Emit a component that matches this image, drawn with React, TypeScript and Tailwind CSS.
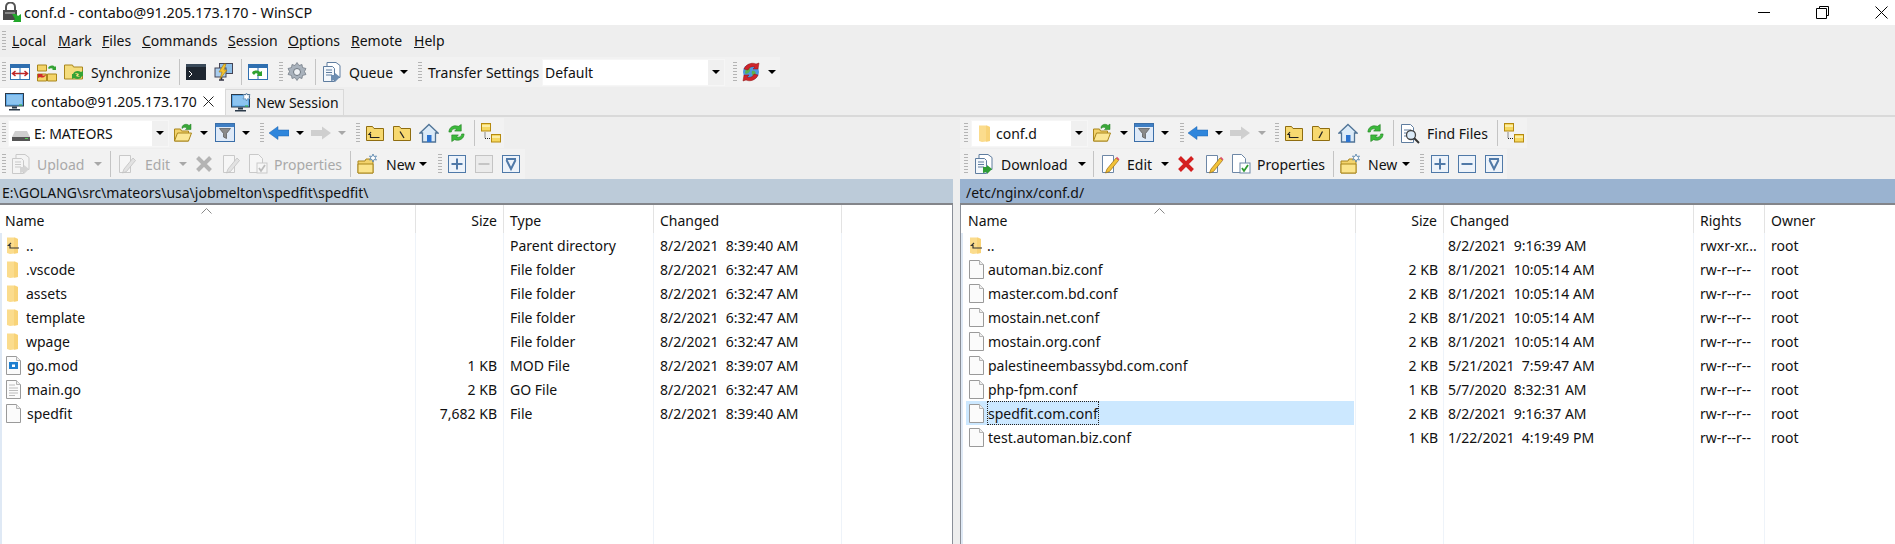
import type { ReactNode } from "react";

// small helpers so the toolbars read top to bottom
function Grip({ ml = "ml-0" }: { ml?: string }) {
  return (
    <div className={`${ml} w-[4px] h-[20px] shrink-0 bg-[repeating-linear-gradient(to_bottom,#b4b4b4_0px,#b4b4b4_1px,transparent_1px,transparent_3px)]`} />
  );
}

function Sep({ ml }: { ml: string }) {
  return <div className={`${ml} w-[1px] h-[26px] shrink-0 bg-[#c4c4c4]`} />;
}

function Caret({ ml, off }: { ml: string; off?: boolean }) {
  return (
    <svg width="8" height="4" viewBox="0 0 8 4" className={`${ml} shrink-0`}>
      <path d="M0 0h8L4 4z" fill={off ? "#a8a8a8" : "#000"} />
    </svg>
  );
}

function Icon({ ml, w = 20, h = 20, vb = "0 0 20 20", children }: { ml: string; w?: number; h?: number; vb?: string; children: ReactNode }) {
  return (
    <svg width={w} height={h} viewBox={vb} className={`${ml} shrink-0`}>
      {children}
    </svg>
  );
}

function Label({ ml, w, off, children }: { ml: string; w: string; off?: boolean; children: ReactNode }) {
  return <span className={`${ml} ${w} shrink-0 whitespace-nowrap ${off ? "text-[#a9a9a9]" : "text-[#111]"}`}>{children}</span>;
}

const GLYPHS = {
  open: (
    <>
      <path d="M1.500 6h6l1 2h7v10h-14z" fill="#f3d36c" stroke="#a9861c" />
      <path d="M1.500 18l3-8h14l-3 8z" fill="#fbe796" stroke="#a9861c" />
      <path d="M9 4c1-3 5-3.500 7-1.500l2-1.500v5.500h-5.500l1.500-1.500c-1.500-1-3.500-1-5 .5z" fill="#38a838" stroke="#1d7a1d" strokeWidth=".5" />
    </>
  ),
  filter: (
    <>
      <rect x=".5" y=".5" width="19" height="18" fill="#dfeaf8" stroke="#3a6ea8" />
      <rect x="1" y="1" width="18" height="3" fill="#3f7fc4" />
      <path d="M4.500 5.500h11l-4 5v5l-3-1.500v-3.500z" fill="#8a8a8a" stroke="#555" strokeWidth=".7" />
    </>
  ),
  back: <path d="M0 10l9-6.500v3.500h11v6h-11v3.500z" fill="#2f86dc" stroke="#1e63ae" strokeWidth=".5" />,
  forward: <path d="M20 10l-9-6.500v3.500h-11v6h11v3.500z" fill="#cfcfcf" />,
  home: (
    <>
      <path d="M10 1.500l9 8.500h-2.500v9h-13v-9h-2.500z" fill="#dcebf8" stroke="#4f7396" strokeWidth="1.300" />
      <rect x="8" y="12" width="4.500" height="7" fill="#2b73d0" />
    </>
  ),
  refresh: (
    <>
      <path d="M2 9c0-5 5-8 10-6l3-2v7h-7l2-2c-3-1-5 0-5.500 3z" fill="#3cb93c" stroke="#1d7d1d" strokeWidth=".6" />
      <path d="M18 11c0 5-5 8-10 6l-3 2v-7h7l-2 2c3 1 5 0 5.500-3z" fill="#3cb93c" stroke="#1d7d1d" strokeWidth=".6" />
    </>
  ),
  tree: (
    <>
      <rect x=".5" y=".5" width="9" height="7.500" fill="#f6d860" stroke="#b58a10" />
      <rect x="10.500" y="11.500" width="9" height="7.500" fill="#f6d860" stroke="#b58a10" />
      <path d="M1 3h8M11 14h8" stroke="#fdf3bd" strokeWidth="1.500" />
      <path d="M4 9.500v6h6" stroke="#222" strokeDasharray="1 1" fill="none" />
    </>
  ),
  newFolder: (
    <>
      <path d="M1 7h7l1-2h7v14h-15z" fill="#f3d36c" stroke="#a9861c" />
      <path d="M1 10h15v9h-15z" fill="#fbe48c" stroke="#a9861c" />
      <path d="M16 0l1 2.500 2.500-.5-1.500 2 1.500 2-2.500-.5-1 2.500-1-2.500-2.500.5 1.500-2-1.500-2 2.500.5z" fill="#fff" stroke="#4f7da8" strokeWidth=".8" />
    </>
  ),
  edit: (
    <>
      <path d="M2.500 1.500h11v17h-11z" fill="#fff" stroke="#6d87a6" />
      <path d="M7 15l-1.500 4 4-1.500 9-11-2.500-2.500z" fill="#f2c238" stroke="#9a6c12" strokeWidth=".7" />
      <path d="M16 4l2.500 2.500 1-1.300-2.500-2.500z" fill="#e0526a" />
    </>
  ),
  editOff: (
    <>
      <path d="M2.500 1.500h11v17h-11z" fill="#f6f6f6" stroke="#c9c9c9" />
      <path d="M7 15l-1.500 4 4-1.500 9-11-2.500-2.500z" fill="#e2e2e2" stroke="#bdbdbd" strokeWidth=".7" />
    </>
  ),
  props: (
    <>
      <path d="M1.500 .5h9l4 4v14h-13z" fill="#fff" stroke="#6d87a6" />
      <rect x="9" y="9" width="10" height="10" fill="#fff" stroke="#6d87a6" />
      <path d="M11 14l2 3 4-6" stroke="#2e9a2e" strokeWidth="1.800" fill="none" />
    </>
  ),
  propsOff: (
    <>
      <path d="M1.500 .5h9l4 4v14h-13z" fill="#f6f6f6" stroke="#c9c9c9" />
      <rect x="9" y="9" width="10" height="10" fill="#f6f6f6" stroke="#c9c9c9" />
      <path d="M11 14l2 3 4-6" stroke="#bcbcbc" strokeWidth="1.800" fill="none" />
    </>
  ),
};

function Glyph({ name, ml, w = 20, h = 20 }: { name: keyof typeof GLYPHS; ml: string; w?: number; h?: number }) {
  return (
    <Icon ml={ml} w={w} h={h}>
      {GLYPHS[name]}
    </Icon>
  );
}

function UpFolder({ ml, mark }: { ml: string; mark: "up" | "back" | "slash" }) {
  return (
    <Icon ml={ml} w={18} h={18} vb="0 0 18 18">
      <path d="M.5 16.500v-14h6l1.500 2h9.500v12z" fill="#f7d970" stroke="#8f6d10" />
      {mark === "up" && <path d="M5 8l-2 2.500h1.500v3h9" stroke="#222" strokeWidth="1.200" fill="none" />}
      {mark === "back" && <path d="M7 7.500l4 6.500" stroke="#222" strokeWidth="1.300" />}
      {mark === "slash" && <path d="M10.500 7.500l-3.500 6.500" stroke="#222" strokeWidth="1.300" />}
    </Icon>
  );
}

function Square({ ml, kind, off }: { ml: string; kind: "plus" | "minus" | "v"; off?: boolean }) {
  const line = off ? "#c4c4c4" : "#4f79a8";
  return (
    <Icon ml={ml} w={18} h={18} vb="0 0 18 18">
      <rect x=".5" y=".5" width="17" height="17" fill={off ? "#ebebeb" : "#edf3fa"} stroke={line} />
      {kind !== "v" && <path d="M3.500 9h11" stroke={line} strokeWidth="2" />}
      {kind === "plus" && <path d="M9 3.500v11" stroke={line} strokeWidth="2" />}
      {kind === "v" && <path d="M4 4h10M4.500 5l4.500 9 4.500-9" stroke={line} strokeWidth="2" fill="none" />}
    </Icon>
  );
}

function BigX({ ml, off }: { ml: string; off?: boolean }) {
  return (
    <Icon ml={ml} w={18} h={18} vb="0 0 18 18">
      <path d="M2.500 2.500l13 13M15.500 2.500l-13 13" stroke={off ? "#b4b4b4" : "#d42020"} strokeWidth="4" />
    </Icon>
  );
}

function DocStack({ ml, green, off }: { ml: string; green?: boolean; off?: boolean }) {
  const line = off ? "#c9c9c9" : "#5f7d9f";
  return (
    <Icon ml={ml}>
      <path d="M5 .5h9l4 3v12h-13z" fill={off ? "#f4f4f4" : "#fff"} stroke={line} />
      <path d="M1.500 4.500h9l2 2v13h-11z" fill={off ? "#f4f4f4" : "#f4f8fc"} stroke={line} />
      <path d="M4 8h6M4 10.500h6M4 13h6" stroke={line} />
      <path d="M9 19l4-1v2l5-5-5-4v2h-4z" fill={green ? "#2f9d35" : off ? "#d4d4d4" : "#6f8fb2"} />
    </Icon>
  );
}

function Monitor({ ml, star }: { ml: string; star?: boolean }) {
  return (
    <Icon ml={ml} w={20} h={20}>
      <rect x=".5" y="1.500" width="18" height="12.500" fill="#5ba6e6" stroke="#2b3a4a" />
      <rect x="2" y="3" width="15" height="9.500" fill="#8cc4f0" />
      <path d="M7 14.500h5v2h-5zM4 17h11v1.500h-11z" fill="#2b3a4a" />
      <rect x="14" y="12.500" width="3" height="1" fill="#38c038" />
      {star && <path d="M15.500 0l1 2 2.500-.5-1 2.500 1 2-2.500-.3-1 2.300-1-2.300-2.500.3 1-2-1-2.500 2.500.5z" fill="#fff" stroke="#4f7da8" strokeWidth=".7" />}
    </Icon>
  );
}

function Combo({ ml, w, icon, text, textMl }: { ml: string; w: string; icon: ReactNode; text: string; textMl: string }) {
  return (
    <div className={`${ml} ${w} h-[27px] shrink-0 bg-white flex items-center border border-[#f6f6f6]`}>
      {icon}
      <span className={`${textMl} text-[#111] whitespace-nowrap`}>{text}</span>
      <div className="ml-auto w-[16px] h-full bg-[#f0f0f0] flex items-center justify-center">
        <svg width="8" height="4" viewBox="0 0 8 4">
          <path d="M0 0h8L4 4z" fill="#000" />
        </svg>
      </div>
    </div>
  );
}

function SmallFolder({ up }: { up?: boolean }) {
  return (
    <svg width="14" height="19" viewBox="0 0 14 19" className="shrink-0">
      <path d="M1 1.500h8l3 1.500v14l-8 1-3-1z" fill="#fbdc8d" />
      <path d="M8 1.500l4 1.500v14l-4 1z" fill="#f6cd6a" opacity=".6" />
      {up && <path d="M5 7l-2.500 2.500h1.500v2.500h9" stroke="#333" strokeWidth="1.200" fill="none" />}
    </svg>
  );
}

function FileIcon({ lines, mod }: { lines?: boolean; mod?: boolean }) {
  return (
    <svg width="15" height="19" viewBox="0 0 15 19" className="shrink-0">
      <path d="M.5 .5h10l4 4v14h-14z" fill="#fbfbfb" stroke="#9a9a9a" />
      <path d="M10.500 .5v4h4" fill="#eee" stroke="#b4b4b4" />
      {lines && <path d="M3 5h6M3 8h9M3 10.500h9M3 13h9M3 15.500h6" stroke="#bcbcbc" />}
      {mod && (
        <>
          <rect x="3" y="6" width="9" height="7" fill="#1f7fd0" />
          <rect x="6" y="8.500" width="3" height="2.500" fill="#fff" />
        </>
      )}
    </svg>
  );
}

type Row = { icon: ReactNode; name: string; size: string; a: string; b: string; rights?: string; owner?: string };

const leftRows: Row[] = [
  { icon: <SmallFolder up />, name: "..", size: "", a: "Parent directory", b: "8/2/2021  8:39:40 AM" },
  { icon: <SmallFolder />, name: ".vscode", size: "", a: "File folder", b: "8/2/2021  6:32:47 AM" },
  { icon: <SmallFolder />, name: "assets", size: "", a: "File folder", b: "8/2/2021  6:32:47 AM" },
  { icon: <SmallFolder />, name: "template", size: "", a: "File folder", b: "8/2/2021  6:32:47 AM" },
  { icon: <SmallFolder />, name: "wpage", size: "", a: "File folder", b: "8/2/2021  6:32:47 AM" },
  { icon: <FileIcon mod />, name: "go.mod", size: "1 KB", a: "MOD File", b: "8/2/2021  8:39:07 AM" },
  { icon: <FileIcon lines />, name: "main.go", size: "2 KB", a: "GO File", b: "8/2/2021  6:32:47 AM" },
  { icon: <FileIcon />, name: "spedfit", size: "7,682 KB", a: "File", b: "8/2/2021  8:39:40 AM" },
];

const rightRows: Row[] = [
  { icon: <SmallFolder up />, name: "..", size: "", a: "8/2/2021  9:16:39 AM", b: "", rights: "rwxr-xr...", owner: "root" },
  { icon: <FileIcon />, name: "automan.biz.conf", size: "2 KB", a: "8/1/2021  10:05:14 AM", b: "", rights: "rw-r--r--", owner: "root" },
  { icon: <FileIcon />, name: "master.com.bd.conf", size: "2 KB", a: "8/1/2021  10:05:14 AM", b: "", rights: "rw-r--r--", owner: "root" },
  { icon: <FileIcon />, name: "mostain.net.conf", size: "2 KB", a: "8/1/2021  10:05:14 AM", b: "", rights: "rw-r--r--", owner: "root" },
  { icon: <FileIcon />, name: "mostain.org.conf", size: "2 KB", a: "8/1/2021  10:05:14 AM", b: "", rights: "rw-r--r--", owner: "root" },
  { icon: <FileIcon />, name: "palestineembassybd.com.conf", size: "2 KB", a: "5/21/2021  7:59:47 AM", b: "", rights: "rw-r--r--", owner: "root" },
  { icon: <FileIcon />, name: "php-fpm.conf", size: "1 KB", a: "5/7/2020  8:32:31 AM", b: "", rights: "rw-r--r--", owner: "root" },
  { icon: <FileIcon />, name: "spedfit.com.conf", size: "2 KB", a: "8/2/2021  9:16:37 AM", b: "", rights: "rw-r--r--", owner: "root" },
  { icon: <FileIcon />, name: "test.automan.biz.conf", size: "1 KB", a: "1/22/2021  4:19:49 PM", b: "", rights: "rw-r--r--", owner: "root" },
];

function HeaderCell({ w, right, pl = "pl-[6px]", children }: { w: string; right?: boolean; pl?: string; children?: ReactNode }) {
  return (
    <div className={`${w} shrink-0 h-full border-r border-[#e3e3e3] flex items-center pt-[2px] pr-[6px] ${pl} ${right ? "justify-end" : ""}`}>
      {children}
    </div>
  );
}

function SortMark({ className }: { className: string }) {
  return (
    <svg width="11" height="6" viewBox="0 0 11 6" className={`absolute top-[3px] ${className}`}>
      <path d="M.5 5.500l5-5 5 5" stroke="#8a8a8a" fill="none" />
    </svg>
  );
}

function ColLine({ left }: { left: string }) {
  return <div className={`absolute inset-y-0 ${left} w-[1px] bg-[#eef3f9]`} />;
}

export default function App() {
  return (
    <div className="w-[1895px] h-[544px] overflow-hidden bg-white flex flex-col text-[14px] font-['Noto_Sans','Open_Sans',sans-serif] text-[#111]">
      {/* title bar */}
      <div className="h-[25px] shrink-0 bg-white flex items-center">
        <svg width="20" height="21" viewBox="0 0 20 21" className="ml-[2px] shrink-0">
          <path d="M4 8V5a4.500 4.500 0 019 0v3" stroke="#555" strokeWidth="2" fill="none" />
          <rect x="1" y="8" width="14" height="10" fill="#4a4a4a" />
          <rect x="3" y="10" width="10" height="2" fill="#8a8a8a" />
          <path d="M10 12h4l2 2 3-2v8h-8l2-3z" fill="#22a82a" />
        </svg>
        <span className="ml-[2px] whitespace-nowrap text-[14.400px]">conf.d - contabo@91.205.173.170 - WinSCP</span>
        <svg width="12" height="1" viewBox="0 0 12 1" className="ml-auto shrink-0">
          <path d="M0 .5h12" stroke="#000" />
        </svg>
        <svg width="13" height="13" viewBox="0 0 13 13" className="ml-[46px] shrink-0">
          <path d="M3.500 2.500v-2h9v9h-2M.5 2.500h10v10h-10z" stroke="#000" fill="none" />
        </svg>
        <svg width="13" height="13" viewBox="0 0 13 13" className="ml-[46px] mr-[7px] shrink-0">
          <path d="M.5.500l12 12M12.500.5l-12 12" stroke="#000" />
        </svg>
      </div>

      {/* top band */}
      <div className="h-[90px] shrink-0 bg-[#eeeeee] flex flex-col">
        <div className="h-[31px] shrink-0 flex items-center">
          <Grip ml="ml-[2px]" />
          <span className="ml-[6px] w-[46px] shrink-0"><u>L</u>ocal</span>
          <span className="w-[44px] shrink-0"><u>M</u>ark</span>
          <span className="w-[40px] shrink-0"><u>F</u>iles</span>
          <span className="w-[86px] shrink-0"><u>C</u>ommands</span>
          <span className="w-[60px] shrink-0"><u>S</u>ession</span>
          <span className="w-[63px] shrink-0"><u>O</u>ptions</span>
          <span className="w-[63px] shrink-0"><u>R</u>emote</span>
          <span className="shrink-0"><u>H</u>elp</span>
        </div>
        <div className="h-[32px] shrink-0 flex items-center">
          <div className="h-[30px] pr-[4px] flex items-center bg-[#f2f2f2]">
            <Grip ml="ml-[2px]" />
            <Icon ml="ml-[4px]">
              <rect x=".5" y="2.500" width="19" height="15" fill="#fff" stroke="#2f6fb0" />
              <rect x="1" y="3" width="18" height="3" fill="#2f6fb0" />
              <path d="M10 3v14" stroke="#2f6fb0" />
              <path d="M3 11.500h14M5.500 9l-3 2.500 3 2.500M14.500 9l3 2.500-3 2.500" stroke="#c02626" strokeWidth="1.500" fill="none" />
            </Icon>
            <Icon ml="ml-[7px]">
              <path d="M.5 3h9v6h-9zM.5 12h9v7h-9zM10.500 12h9v7h-9z" fill="#f4d468" stroke="#a9861c" />
              <path d="M11 6c2-3 5-3 7-1l1-1v4h-4l1-1c-1-1-3-1-4 0z" fill="#35a335" />
              <path d="M9 13c-2 3-4 3-6 2l-2 1v-4h5l-1 1c1 1 3 1 4-1z" fill="#d02a2a" />
            </Icon>
            <Icon ml="ml-[7px]">
              <path d="M.5 3h8l1 2h9v12h-18z" fill="#f4dc7c" stroke="#a9861c" />
              <path d="M9 12c1-3 5-4 8-2l2-1v5h-5l1-2c-2-1-4-1-5 1z" fill="#35a335" />
              <path d="M18 14c-1 3-5 4-8 2l-2 1v-5h5l-1 2c2 1 4 1 5-1z" fill="#35a335" />
            </Icon>
            <Label ml="ml-[7px]" w="w-[79px]">Synchronize</Label>
            <Sep ml="ml-[9px]" />
            <Icon ml="ml-[6px]">
              <rect y="2" width="20" height="16" fill="#1e2630" />
              <rect y="2" width="20" height="3" fill="#3a4a5a" />
              <path d="M3 9l3 3-3 3" stroke="#fff" fill="none" />
            </Icon>
            <Icon ml="ml-[7px]">
              <rect x="6.500" y="1.500" width="13" height="10" fill="#8fbfe8" stroke="#445" />
              <rect x="2" y="6" width="11" height="9" fill="#a9cdee" stroke="#445" />
              <path d="M6 18h5M8.500 15v3" stroke="#334" strokeWidth="1.500" />
              <path d="M11 2l-5 8h3l-2 7 7-9h-3l2-6z" fill="#f4c330" stroke="#a5780e" strokeWidth=".6" />
            </Icon>
            <Sep ml="ml-[8px]" />
            <Icon ml="ml-[6px]">
              <rect x=".5" y="2.500" width="19" height="15" fill="#fff" stroke="#2f6fb0" />
              <rect x="1" y="3" width="18" height="3" fill="#2f6fb0" />
              <path d="M10 3v14" stroke="#2f6fb0" />
              <path d="M4 11c1-3 6-3 8-1l2-1v5h-5l1-2c-1-1-3-1-4 1z" fill="#2fa12f" />
            </Icon>
            <Grip ml="ml-[11px]" />
            <Icon ml="ml-[4px]">
              <path d="M10 .5l2 3 3-1 .5 3 3.500 1-1.500 3 1.500 3-3.500 1-.5 3-3-1-2 3-2-3-3 1-.5-3-3.500-1 1.500-3-1.500-3 3.500-1 .5-3 3 1z" fill="#a9b2bc" stroke="#6d7680" strokeWidth=".7" />
              <circle cx="10" cy="10" r="3.500" fill="#eef1f4" stroke="#6d7680" />
            </Icon>
            <Sep ml="ml-[8px]" />
            <DocStack ml="ml-[6px]" />
            <Label ml="ml-[7px]" w="w-[43px]">Queue</Label>
            <Caret ml="ml-[8px]" />
            <Grip ml="ml-[10px]" />
            <Label ml="ml-[6px]" w="w-[108px]">Transfer Settings</Label>
            <Combo ml="ml-[6px]" w="w-[183px]" icon={null} text="Default" textMl="ml-[2px]" />
            <Grip ml="ml-[8px]" />
            <Icon ml="ml-[4px]">
              <circle cx="10" cy="10" r="8" fill="#4f96e0" />
              <path d="M5 6c3-2 5 1 4 3s-4 4-5 2zM11 9c3-1 5 2 3 5-2 1-4-2-3-5z" fill="#59b24f" />
              <path d="M3 7c2-5 8-7 12-5l3-1-1 6h-5l2-2c-3-1-6 0-7 3zM17 13c-2 5-8 7-12 5l-3 1 1-6h5l-2 2c3 1 6 0 7-3z" fill="#d0242a" stroke="#8f1414" strokeWidth=".5" />
            </Icon>
            <Caret ml="ml-[7px]" />
          </div>
        </div>
        <div className="h-[27px] shrink-0 flex items-end">
          <div className="w-[225px] h-[27px] shrink-0 bg-white flex items-center">
            <Monitor ml="ml-[5px]" />
            <span className="ml-[6px] whitespace-nowrap w-[172px] shrink-0">contabo@91.205.173.170</span>
            <svg width="11" height="11" viewBox="0 0 11 11" className="shrink-0">
              <path d="M.5.500l10 10M10.500.5l-10 10" stroke="#222" />
            </svg>
          </div>
          <div className="w-[119px] h-[26px] shrink-0 bg-[#f0f0f0] border border-b-0 border-[#d9d9d9] flex items-center">
            <Monitor ml="ml-[5px]" star />
            <span className="ml-[5px] whitespace-nowrap">New Session</span>
          </div>
        </div>
      </div>

      {/* panels */}
      <div className="h-[429px] shrink-0 flex flex-col bg-[#eeeeee] border-t-2 border-[#d9d9d9]">
        <div className="h-[62px] shrink-0 flex">
          <div className="w-[960px] shrink-0 flex flex-col">
            <div className="h-[32px] shrink-0 flex items-center">
              <div className="h-[30px] pr-[3px] flex items-center bg-[#f2f2f2]">
                <Grip ml="ml-[2px]" />
                <Combo
                  ml="ml-[2px]"
                  w="w-[161px]"
                  text="E: MATEORS"
                  textMl="ml-[4px]"
                  icon={
                    <svg width="18" height="10" viewBox="0 0 18 10" className="ml-[3px] mt-[5px] shrink-0">
                      <path d="M3 0h12l3 6v4h-18v-4z" fill="#cfcfcf" />
                      <path d="M0 6h18v4h-18z" fill="#555" />
                      <rect x="13" y="7" width="3" height="1" fill="#5c5" />
                    </svg>
                  }
                />
                <Glyph name="open" ml="ml-[4px]" />
                <Caret ml="ml-[7px]" />
                <Glyph name="filter" ml="ml-[7px]" />
                <Caret ml="ml-[7px]" />
                <Grip ml="ml-[10px]" />
                <Glyph name="back" ml="ml-[5px]" />
                <Caret ml="ml-[7px]" />
                <Glyph name="forward" ml="ml-[7px]" />
                <Caret ml="ml-[7px]" off />
                <Grip ml="ml-[10px]" />
                <UpFolder ml="ml-[6px]" mark="up" />
                <UpFolder ml="ml-[9px]" mark="back" />
                <Glyph name="home" ml="ml-[8px]" />
                <Glyph name="refresh" ml="ml-[8px]" w={19} h={20} />
                <Sep ml="ml-[8px]" />
                <Glyph name="tree" ml="ml-[6px]" />
              </div>
            </div>
            <div className="h-[30px] shrink-0 flex items-center">
              <div className="h-[30px] pr-[5px] flex items-center bg-[#f2f2f2]">
                <Grip ml="ml-[2px]" />
                <DocStack ml="ml-[5px]" off />
                <Label ml="ml-[6px]" w="w-[48px]" off>Upload</Label>
                <Caret ml="ml-[9px]" off />
                <Sep ml="ml-[8px]" />
                <Glyph name="editOff" ml="ml-[6px]" />
                <Label ml="ml-[8px]" w="w-[33px]" off>Edit</Label>
                <Caret ml="ml-[1px]" off />
                <BigX ml="ml-[8px]" off />
                <Glyph name="editOff" ml="ml-[8px]" />
                <Glyph name="propsOff" ml="ml-[7px]" />
                <Label ml="ml-[6px]" w="w-[67px]" off>Properties</Label>
                <Sep ml="ml-[9px]" />
                <Glyph name="newFolder" ml="ml-[6px]" />
                <Label ml="ml-[9px]" w="w-[29px]">New</Label>
                <Caret ml="ml-[4px]" />
                <Grip ml="ml-[11px]" />
                <Square ml="ml-[6px]" kind="plus" />
                <Square ml="ml-[9px]" kind="minus" off />
                <Square ml="ml-[9px]" kind="v" />
              </div>
            </div>
          </div>
          <div className="flex-1 flex flex-col">
            <div className="h-[32px] shrink-0 flex items-center">
              <div className="h-[30px] pr-[3px] flex items-center bg-[#f2f2f2]">
                <Grip ml="ml-[4px]" />
                <Combo
                  ml="ml-[3px]"
                  w="w-[117px]"
                  text="conf.d"
                  textMl="ml-[4px]"
                  icon={<div className="ml-[6px] flex"><SmallFolder /></div>}
                />
                <Glyph name="open" ml="ml-[4px]" />
                <Caret ml="ml-[8px]" />
                <Glyph name="filter" ml="ml-[6px]" />
                <Caret ml="ml-[7px]" />
                <Grip ml="ml-[11px]" />
                <Glyph name="back" ml="ml-[4px]" />
                <Caret ml="ml-[7px]" />
                <Glyph name="forward" ml="ml-[7px]" />
                <Caret ml="ml-[8px]" off />
                <Grip ml="ml-[9px]" />
                <UpFolder ml="ml-[6px]" mark="up" />
                <UpFolder ml="ml-[9px]" mark="slash" />
                <Glyph name="home" ml="ml-[8px]" />
                <Glyph name="refresh" ml="ml-[8px]" w={19} h={20} />
                <Sep ml="ml-[8px]" />
                <svg width="20" height="21" viewBox="0 0 20 21" className="ml-[6px] shrink-0">
                  <path d="M1.500 1.500h9l3 3v15h-12z" fill="#fff" stroke="#5f7d9f" />
                  <path d="M4 7h7M4 10h3M4 13h3" stroke="#5f7d9f" />
                  <circle cx="11" cy="12" r="4.500" fill="#dcebf8" stroke="#444" strokeWidth="1.300" />
                  <path d="M14 15l5 5" stroke="#333" strokeWidth="2" />
                </svg>
                <Label ml="ml-[7px]" w="w-[62px]">Find Files</Label>
                <Sep ml="ml-[8px]" />
                <Glyph name="tree" ml="ml-[6px]" />
              </div>
            </div>
            <div className="h-[30px] shrink-0 flex items-center">
              <div className="h-[30px] pr-[4px] flex items-center bg-[#f2f2f2]">
                <Grip ml="ml-[4px]" />
                <DocStack ml="ml-[6px]" green />
                <Label ml="ml-[7px]" w="w-[67px]">Download</Label>
                <Caret ml="ml-[10px]" />
                <Sep ml="ml-[7px]" />
                <Glyph name="edit" ml="ml-[6px]" />
                <Label ml="ml-[7px]" w="w-[31px]">Edit</Label>
                <Caret ml="ml-[3px]" />
                <BigX ml="ml-[8px]" />
                <Glyph name="edit" ml="ml-[9px]" />
                <Glyph name="props" ml="ml-[7px]" />
                <Label ml="ml-[6px]" w="w-[67px]">Properties</Label>
                <Sep ml="ml-[9px]" />
                <Glyph name="newFolder" ml="ml-[6px]" />
                <Label ml="ml-[8px]" w="w-[30px]">New</Label>
                <Caret ml="ml-[4px]" />
                <Grip ml="ml-[10px]" />
                <Square ml="ml-[7px]" kind="plus" />
                <Square ml="ml-[9px]" kind="minus" />
                <Square ml="ml-[9px]" kind="v" />
              </div>
            </div>
          </div>
        </div>

        <div className="flex-1 flex min-h-0">
          {/* left panel */}
          <div className="w-[953px] shrink-0 flex flex-col">
            <div className="h-[26px] shrink-0 bg-[#bccbd9] border-b-2 border-[#83858a] flex items-center pt-[3px] px-[2px] whitespace-nowrap">
              E:\GOLANG\src\mateors\usa\jobmelton\spedfit\spedfit\
            </div>
            <div className="flex-1 flex flex-col border-r border-[#8a8f98]">
              <div className="relative h-[28px] shrink-0 bg-white flex items-center">
                <SortMark className="left-[201px]" />
                <HeaderCell w="w-[416px]" pl="pl-[5px]">Name</HeaderCell>
                <HeaderCell w="w-[88px]" right>Size</HeaderCell>
                <HeaderCell w="w-[150px]">Type</HeaderCell>
                <HeaderCell w="w-[188px]">Changed</HeaderCell>
              </div>
              <div className="relative flex-1 bg-white border-l-2 border-[#dfe9f5]">
                <ColLine left="left-[413px]" />
                <ColLine left="left-[501px]" />
                <ColLine left="left-[651px]" />
                <ColLine left="left-[839px]" />
                {leftRows.map((r) => (
                  <div key={r.name} className="relative h-[24px] flex items-center whitespace-pre">
                    <div className="w-[413px] shrink-0 flex items-center pl-[4px]">
                      {r.icon}
                      <span className="ml-[6px] pt-[1px]">{r.name}</span>
                    </div>
                    <div className="w-[82px] shrink-0 text-right pt-[1px]">{r.size}</div>
                    <div className="w-[156px] shrink-0 pl-[13px] pt-[1px]">{r.a}</div>
                    <div className="shrink-0 pl-[7px] pt-[1px]">{r.b}</div>
                  </div>
                ))}
              </div>
            </div>
          </div>
          {/* splitter */}
          <div className="w-[7px] shrink-0 bg-[#eeeeee]" />
          {/* right panel */}
          <div className="flex-1 flex flex-col">
            <div className="h-[26px] shrink-0 bg-[#9ab3d0] border-b-2 border-[#83858a] flex items-center pt-[3px] px-[6px] whitespace-nowrap">
              /etc/nginx/conf.d/
            </div>
            <div className="flex-1 flex flex-col border-l border-[#8a8f98]">
              <div className="relative h-[28px] shrink-0 bg-white flex items-center">
                <SortMark className="left-[193px]" />
                <HeaderCell w="w-[395px]" pl="pl-[7px]">Name</HeaderCell>
                <HeaderCell w="w-[88px]" right>Size</HeaderCell>
                <HeaderCell w="w-[250px]">Changed</HeaderCell>
                <HeaderCell w="w-[71px]">Rights</HeaderCell>
                <div className="pl-[6px] pt-[2px]">Owner</div>
              </div>
              <div className="relative flex-1 bg-white border-l-2 border-[#dfe9f5]">
                <ColLine left="left-[392px]" />
                <ColLine left="left-[480px]" />
                <ColLine left="left-[730px]" />
                <ColLine left="left-[801px]" />
                {rightRows.map((r) => (
                  <div key={r.name} className="relative h-[24px] flex items-center whitespace-pre">
                    <div className={`ml-[3px] w-[388px] h-full shrink-0 flex items-center pl-[3px] ${r.name === "spedfit.com.conf" ? "bg-[#cce8ff]" : ""}`}>
                      {r.icon}
                      <span className={`ml-[4px] leading-[20px] pt-[2px] ${r.name === "spedfit.com.conf" ? "outline-1 outline-dotted outline-[#222]" : ""}`}>{r.name}</span>
                    </div>
                    <div className="w-[84px] shrink-0 text-right pt-[1px]">{r.size}</div>
                    <div className="w-[255px] shrink-0 pl-[10px] pt-[1px]">{r.a}</div>
                    <div className="w-[71px] shrink-0 pl-[7px] pt-[1px]">{r.rights}</div>
                    <div className="shrink-0 pl-[7px] pt-[1px]">{r.owner}</div>
                  </div>
                ))}
              </div>
            </div>
          </div>
        </div>
      </div>
    </div>
  );
}
